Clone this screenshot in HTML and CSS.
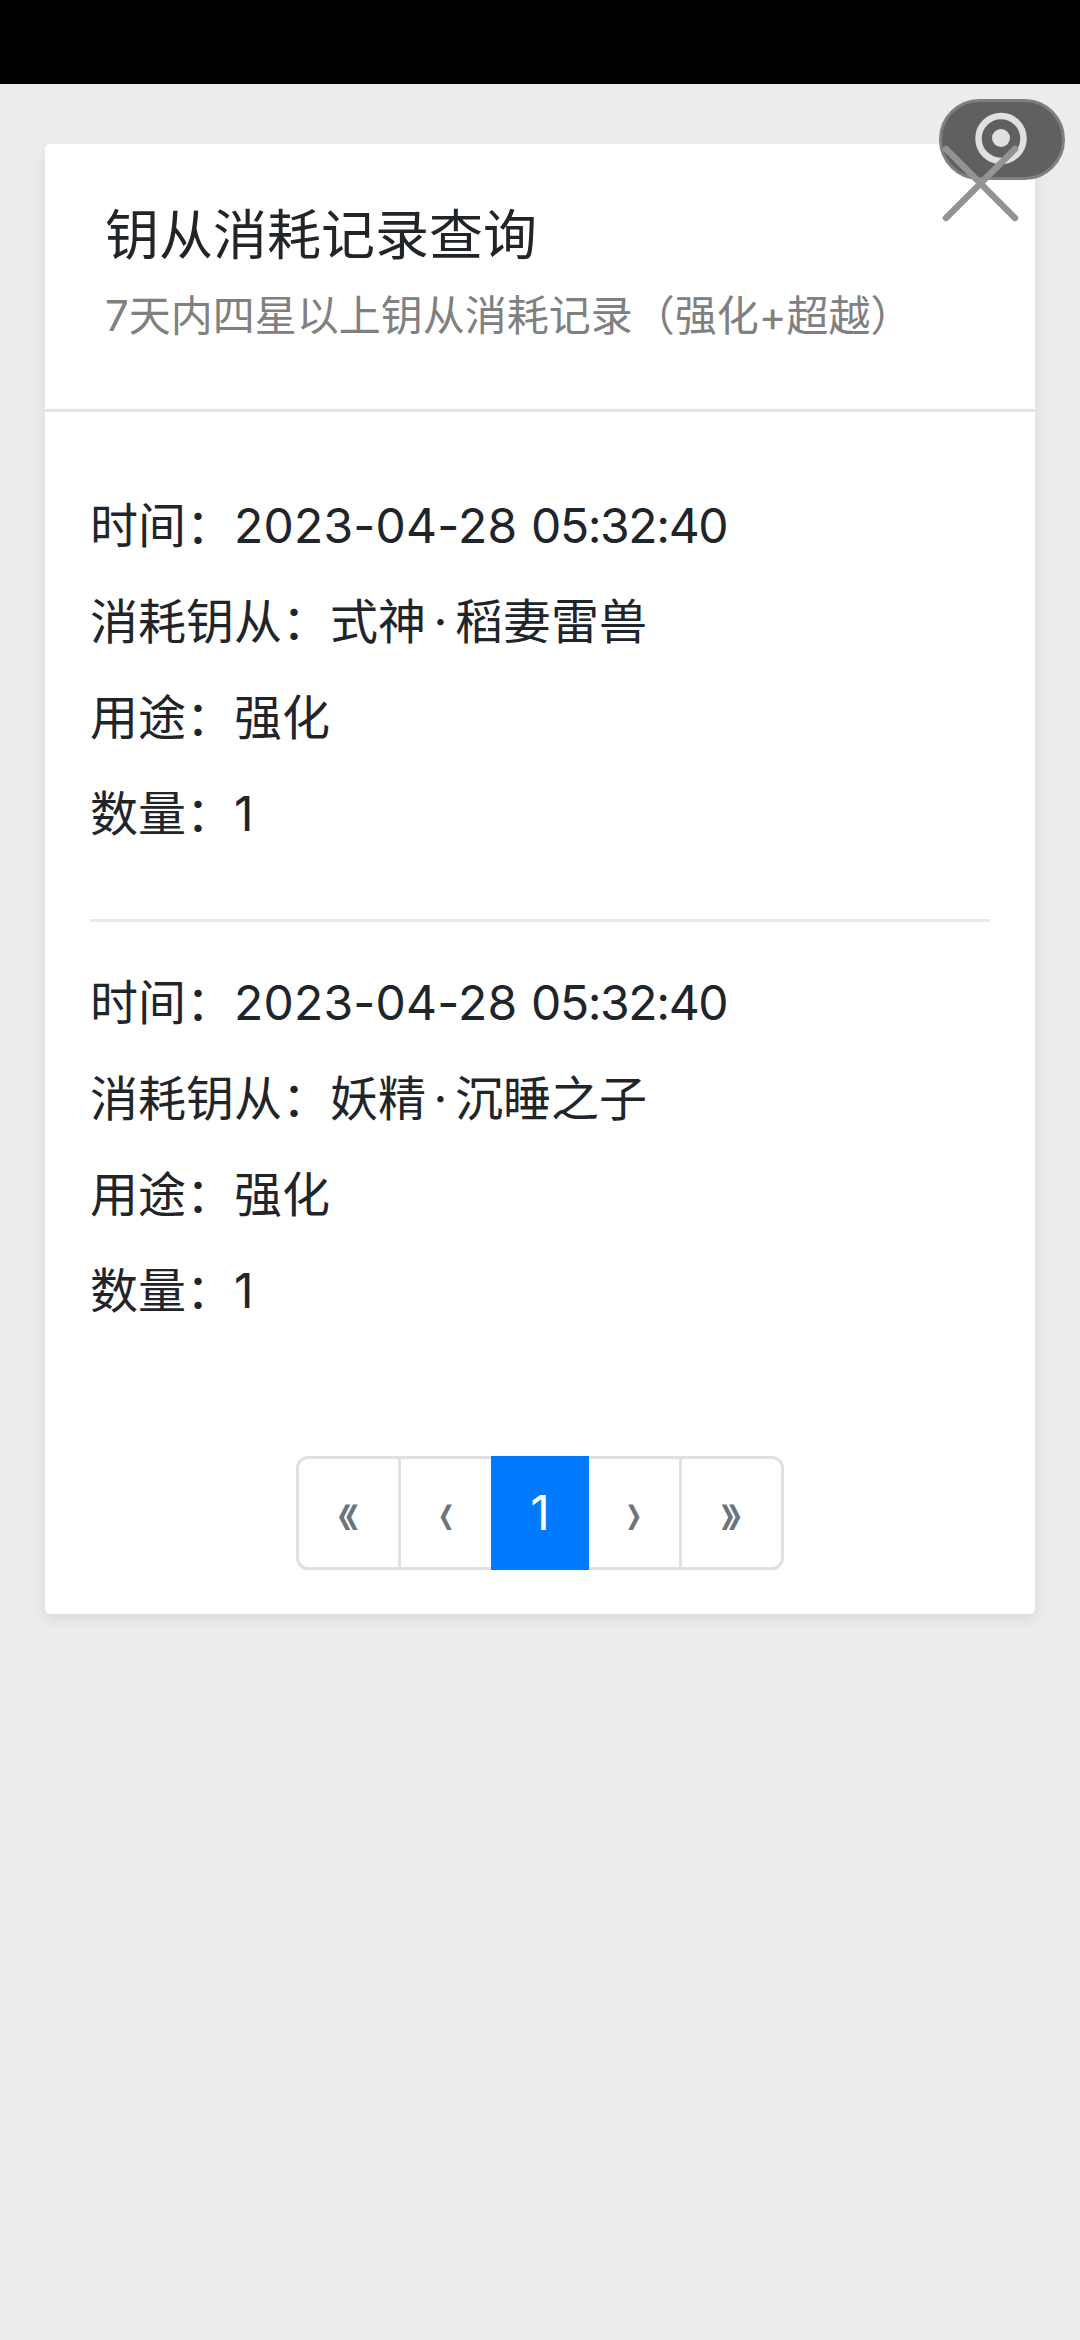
FILE: index.html
```html
<!DOCTYPE html>
<html lang="zh-CN">
<head>
  <meta charset="UTF-8">
  <title>钥从消耗记录查询</title>
  <meta name="viewport" content="width=device-width, initial-scale=1.0">
  <link rel="stylesheet" href="styles.css">
</head>
<body>
  <div class="status-bar"></div>

  <div class="card">
    <div class="card-header">
      <h1>钥从消耗记录查询</h1>
      <p>7天内四星以上钥从消耗记录（强化+超越）</p>
    </div>
    <div class="card-body">
      <div class="record">
        <div>时间：<span class="num">2023-04-28 <span class="clock">05:32:40</span></span></div>
        <div>消耗钥从：式神<span class="dot">·</span>稻妻雷兽</div>
        <div>用途：强化</div>
        <div>数量：<span class="num">1</span></div>
      </div>
      <div class="record">
        <div>时间：<span class="num">2023-04-28 <span class="clock">05:32:40</span></span></div>
        <div>消耗钥从：妖精<span class="dot">·</span>沉睡之子</div>
        <div>用途：强化</div>
        <div>数量：<span class="num">1</span></div>
      </div>
      <ul class="pagination">
        <li class="page-item edge"><span class="arrow">«</span></li>
        <li class="page-item"><span class="arrow">‹</span></li>
        <li class="page-item active">1</li>
        <li class="page-item"><span class="arrow">›</span></li>
        <li class="page-item edge"><span class="arrow">»</span></li>
      </ul>
    </div>
  </div>

  <!-- floating recorder pill and close button -->
  <svg class="overlay" width="140" height="140" viewBox="0 0 140 140">
    <rect x="10.5" y="10.5" width="123" height="78" rx="39" fill="#606060" stroke="#7f7f7f" stroke-width="3"/>
    <circle cx="71" cy="48.5" r="22.5" fill="none" stroke="#e0e0e0" stroke-width="6.5"/>
    <circle cx="71" cy="48" r="9" fill="#e0e0e0"/>
    <path d="M16 59l69 69M85 59l-69 69" fill="none" stroke="#939393" stroke-width="6.5" stroke-linecap="round"/>
  </svg>
</body>
</html>
```

FILE: styles.css
```css
* {
  box-sizing: border-box;
}
body {
  margin: 0;
  min-height: 2340px;
  background: #ececec;
  color: #212529;
  font-family: "Noto Sans CJK SC", sans-serif;
  font-size: 48px;
}
.status-bar {
  height: 84px;
  background: #000;
}
.card {
  margin: 60px 45px 0;
  height: 1470px;
  background: #fff;
  border-radius: 5px;
  box-shadow: 0 6px 12px rgba(0, 0, 0, 0.075);
}
.card-header {
  height: 268px;
  padding: 55px 60px 0;
  border-bottom: 3px solid #e4e4e4;
}
.card-header h1 {
  margin: 0;
  font-size: 54px;
  font-weight: 400;
  line-height: 66px;
}
.card-header p {
  margin: 21px 0 0;
  color: #808080;
  font-family: Inter, "Noto Sans CJK SC", sans-serif;
  font-size: 42px;
  line-height: 60px;
  white-space: nowrap;
}
.card-body {
  padding: 62px 45px 0;
}
.record {
  line-height: 96px;
  white-space: nowrap;
}
.record > div {
  height: 96px;
}
.record + .record {
  margin-top: 61px;
  padding-top: 29px;
  border-top: 3px solid #e9e9e9;
}
.num {
  font-family: Inter, "Noto Sans CJK SC", sans-serif;
  letter-spacing: 0.2px;
}
.clock {
  letter-spacing: -1.4px;
}
.dot {
  display: inline-block;
  width: 29px;
  font-family: Inter, sans-serif;
  text-align: center;
}
.pagination {
  display: flex;
  justify-content: center;
  margin: 121px 0 0;
  padding: 0;
  list-style: none;
}
.page-item {
  width: 96px;
  height: 114px;
  border: 3px solid #dee2e6;
  color: #6c757d;
  font-family: Inter, sans-serif;
  line-height: 108px;
  text-align: center;
}
.page-item + .page-item {
  margin-left: -3px;
}
.page-item.edge {
  width: 105px;
}
.page-item:first-child {
  border-radius: 12px 0 0 12px;
}
.page-item:last-child {
  border-radius: 0 12px 12px 0;
}
.page-item.active {
  position: relative;
  z-index: 1;
  width: 98px;
  background: #007bff;
  border-color: #007bff;
  color: #fff;
}
.arrow {
  display: inline-block;
  font-weight: 600;
  transform: translateY(1px) scale(0.7, 1.15);
}
.overlay {
  position: absolute;
  top: 90px;
  left: 930px;
}
```
